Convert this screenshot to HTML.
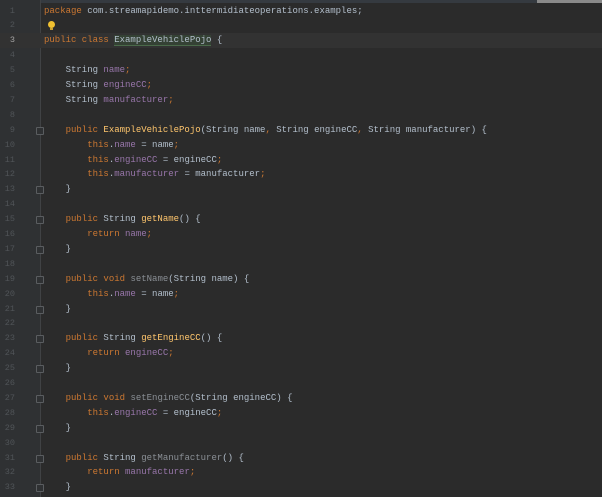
<!DOCTYPE html>
<html><head><style>
html,body{margin:0;padding:0;}
body{width:602px;height:497px;background:#2b2b2b;position:relative;overflow:hidden;font-family:"Liberation Mono",monospace;font-size:9px;}
#gut{position:absolute;left:0;top:0;width:40px;height:497px;background:#2f3133;border-right:1px solid #404244;}
#top{position:absolute;left:537px;top:0;width:65px;height:3px;background:#8a8a8a;}
#topb{position:absolute;left:0;top:0;width:537px;height:3px;background:#353a40;}
.l{position:absolute;left:0;height:15px;line-height:15px;width:602px;white-space:pre;color:#b3bfcc;}
.n{position:absolute;left:0;width:15px;text-align:right;color:#505458;font-size:8.5px;}
.c{position:absolute;left:44px;}
.hl{background:#323232;}
.k{color:#cc7832}.f{color:#9876aa}.m{color:#ffc66d}.u{color:#8a8f95}
.fold{position:absolute;left:36px;top:4px;width:6px;height:6px;border:1px solid #5a5d60;border-radius:1px;background:#2f3133;}
.cls{background:#344134;border-bottom:1px solid #4a6a4a;}
.bulb{position:absolute;left:48px;top:3px;width:7px;height:7px;border-radius:50%;background:#f0c030;}
.bulb:after{content:"";position:absolute;left:2px;top:7px;width:3px;height:2px;background:#c9a030;}
</style></head><body>
<div id="topb"></div><div id="top"></div>
<div id="gut"></div>
<div class="l" style="top:3.5px"><span class="n">1</span><span class="c"><span class="k">package</span> com.streamapidemo.inttermidiateoperations.examples;</span></div>
<div class="l" style="top:18.4px"><span class="n">2</span><span class="bulb"></span></div>
<div class="l hl" style="top:33.3px"><span class="n" style="color:#a4a3a3">3</span><span class="c"><span class="k">public class</span> <span class="cls">ExampleVehiclePojo</span> {</span></div>
<div class="l" style="top:48.2px"><span class="n">4</span></div>
<div class="l" style="top:63.1px"><span class="n">5</span><span class="c">    String <span class="f">name</span><span class="k">;</span></span></div>
<div class="l" style="top:78px"><span class="n">6</span><span class="c">    String <span class="f">engineCC</span><span class="k">;</span></span></div>
<div class="l" style="top:92.9px"><span class="n">7</span><span class="c">    String <span class="f">manufacturer</span><span class="k">;</span></span></div>
<div class="l" style="top:107.8px"><span class="n">8</span></div>
<div class="l" style="top:122.7px"><span class="n">9</span><span class="fold"></span><span class="c">    <span class="k">public</span> <span class="m">ExampleVehiclePojo</span>(String name<span class="k">,</span> String engineCC<span class="k">,</span> String manufacturer) {</span></div>
<div class="l" style="top:137.6px"><span class="n">10</span><span class="c">        <span class="k">this</span>.<span class="f">name</span> = name<span class="k">;</span></span></div>
<div class="l" style="top:152.5px"><span class="n">11</span><span class="c">        <span class="k">this</span>.<span class="f">engineCC</span> = engineCC<span class="k">;</span></span></div>
<div class="l" style="top:167.4px"><span class="n">12</span><span class="c">        <span class="k">this</span>.<span class="f">manufacturer</span> = manufacturer<span class="k">;</span></span></div>
<div class="l" style="top:182.3px"><span class="n">13</span><span class="fold"></span><span class="c">    }</span></div>
<div class="l" style="top:197.2px"><span class="n">14</span></div>
<div class="l" style="top:212.1px"><span class="n">15</span><span class="fold"></span><span class="c">    <span class="k">public</span> String <span class="m">getName</span>() {</span></div>
<div class="l" style="top:227px"><span class="n">16</span><span class="c">        <span class="k">return</span> <span class="f">name</span><span class="k">;</span></span></div>
<div class="l" style="top:241.9px"><span class="n">17</span><span class="fold"></span><span class="c">    }</span></div>
<div class="l" style="top:256.8px"><span class="n">18</span></div>
<div class="l" style="top:271.7px"><span class="n">19</span><span class="fold"></span><span class="c">    <span class="k">public void</span> <span class="u">setName</span>(String name) {</span></div>
<div class="l" style="top:286.6px"><span class="n">20</span><span class="c">        <span class="k">this</span>.<span class="f">name</span> = name<span class="k">;</span></span></div>
<div class="l" style="top:301.5px"><span class="n">21</span><span class="fold"></span><span class="c">    }</span></div>
<div class="l" style="top:316.4px"><span class="n">22</span></div>
<div class="l" style="top:331.3px"><span class="n">23</span><span class="fold"></span><span class="c">    <span class="k">public</span> String <span class="m">getEngineCC</span>() {</span></div>
<div class="l" style="top:346.2px"><span class="n">24</span><span class="c">        <span class="k">return</span> <span class="f">engineCC</span><span class="k">;</span></span></div>
<div class="l" style="top:361.1px"><span class="n">25</span><span class="fold"></span><span class="c">    }</span></div>
<div class="l" style="top:376px"><span class="n">26</span></div>
<div class="l" style="top:390.9px"><span class="n">27</span><span class="fold"></span><span class="c">    <span class="k">public void</span> <span class="u">setEngineCC</span>(String engineCC) {</span></div>
<div class="l" style="top:405.8px"><span class="n">28</span><span class="c">        <span class="k">this</span>.<span class="f">engineCC</span> = engineCC<span class="k">;</span></span></div>
<div class="l" style="top:420.7px"><span class="n">29</span><span class="fold"></span><span class="c">    }</span></div>
<div class="l" style="top:435.6px"><span class="n">30</span></div>
<div class="l" style="top:450.5px"><span class="n">31</span><span class="fold"></span><span class="c">    <span class="k">public</span> String <span class="u">getManufacturer</span>() {</span></div>
<div class="l" style="top:465.4px"><span class="n">32</span><span class="c">        <span class="k">return</span> <span class="f">manufacturer</span><span class="k">;</span></span></div>
<div class="l" style="top:480.3px"><span class="n">33</span><span class="fold"></span><span class="c">    }</span></div>
</body></html>
